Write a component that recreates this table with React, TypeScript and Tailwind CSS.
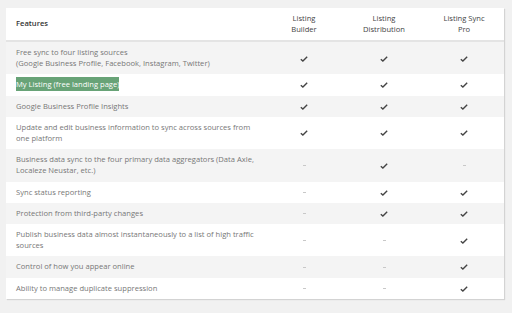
import React from 'react';

type Row = { label: React.ReactNode; cols: [boolean, boolean, boolean] };

const rows: Row[] = [
  {
    label: (
      <>
        Free sync to four listing sources
        <br />
        (Google Business Profile, Facebook, Instagram, Twitter)
      </>
    ),
    cols: [true, true, true],
  },
  {
    label: <span className="bg-[#68a377] text-white py-[2px]">My Listing (free landing page)</span>,
    cols: [true, true, true],
  },
  { label: 'Google Business Profile Insights', cols: [true, true, true] },
  {
    label: 'Update and edit business information to sync across sources from one platform',
    cols: [true, true, true],
  },
  {
    label: 'Business data sync to the four primary data aggregators (Data Axle, Localeze Neustar, etc.)',
    cols: [false, true, false],
  },
  { label: 'Sync status reporting', cols: [false, true, true] },
  { label: 'Protection from third-party changes', cols: [false, true, true] },
  {
    label: 'Publish business data almost instantaneously to a list of high traffic sources',
    cols: [false, false, true],
  },
  { label: 'Control of how you appear online', cols: [false, false, true] },
  { label: 'Ability to manage duplicate suppression', cols: [false, false, true] },
];

const Check = () => (
  <svg width="8" height="6" viewBox="0 0 8 6" className="inline-block">
    <path d="M0.8 3.2 L2.9 5 L7.2 0.8" fill="none" stroke="#444" strokeWidth="1.4" />
  </svg>
);

const Dash = () => <span className="inline-block w-[3px] h-px bg-[#c8c8c8] align-middle" />;

export default function App() {
  return (
    <div className="w-[512px] h-[313px] bg-[#f1f1f1] pt-2 pl-[6px] font-['Open_Sans',sans-serif]">
      <div className="w-[498px] bg-white shadow-[1px_1px_1px_rgba(0,0,0,0.12)]">
        <table className="w-full table-fixed border-collapse text-[7.6px] leading-[11.2px] text-[#777]">
          <colgroup>
            <col className="w-[258px]" />
            <col className="w-[80px]" />
            <col className="w-[80px]" />
            <col className="w-[80px]" />
          </colgroup>
          <thead>
            <tr className="h-[33px] border-b-2 border-[#e4e4e4] text-[#444]">
              <th className="text-left pl-[10px] font-semibold text-[#333]">Features</th>
              <th className="font-normal">
                Listing
                <br />
                Builder
              </th>
              <th className="font-normal">
                Listing
                <br />
                Distribution
              </th>
              <th className="font-normal">
                Listing Sync
                <br />
                Pro
              </th>
            </tr>
          </thead>
          <tbody>
            {rows.map((r, i) => (
              <tr key={i} className={i % 2 === 0 ? 'bg-[#f4f4f4]' : 'bg-white'}>
                <td className="pl-[10px] pr-2 py-[5px]">{r.label}</td>
                {r.cols.map((c, j) => (
                  <td key={j} className="text-center">
                    {c ? <Check /> : <Dash />}
                  </td>
                ))}
              </tr>
            ))}
          </tbody>
        </table>
      </div>
    </div>
  );
}
